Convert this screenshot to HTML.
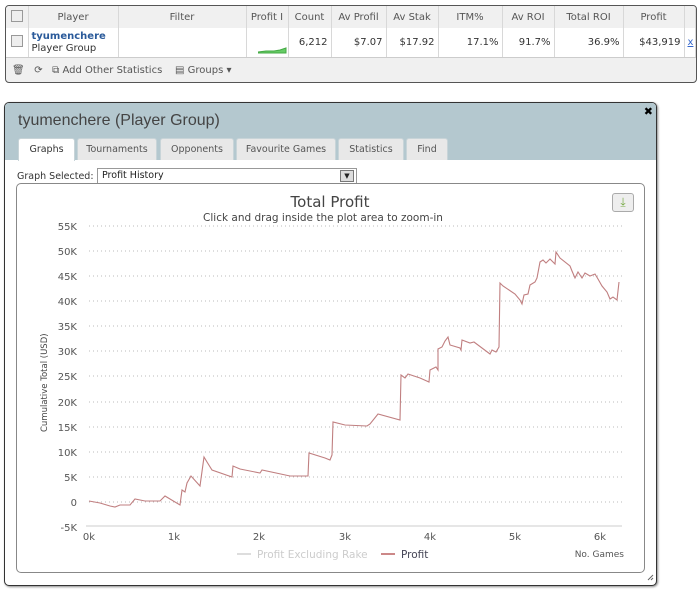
<!DOCTYPE html>
<html><head><meta charset="utf-8"><style>
body{margin:0;width:700px;height:593px;background:#fff;font-family:"DejaVu Sans","Liberation Sans",sans-serif;position:relative;overflow:hidden}
.abs{position:absolute}
#top{left:5px;top:5px;width:690px;height:76px;border:1px solid #555;border-radius:4px;background:#f0f0f0;overflow:hidden}
table{border-collapse:collapse;font-size:10px;color:#444;table-layout:fixed}
td{border-right:1px solid #d8d8d8;height:24px;padding:0 3px;white-space:nowrap;overflow:hidden}
tr.h td{background:#f0f0f0;color:#555;text-align:center;height:22px}
tr.d td{background:#fff;border-bottom:1px solid #ccc;height:27px;text-align:right;color:#333}
.cb{width:10px;height:10px;border:1px solid #999;background:#eee;display:inline-block}
#dlg{left:4px;top:102px;width:651px;height:482px;border:1px solid #333;border-radius:5px;background:#fff;box-shadow:1px 1px 2px #888;overflow:hidden}
#hd{left:0;top:0;width:651px;height:57px;background:#b4c8cf}
.tab{position:absolute;top:35px;height:21px;background:#e8e8e8;border:1px solid #c8d4d8;border-bottom:none;border-radius:3px 3px 0 0;font-size:9.5px;color:#555;text-align:center;line-height:22px}
</style></head><body>
<div id="top" class="abs">
<table style="width:690px">
<colgroup><col style="width:22px"><col style="width:90px"><col style="width:128px"><col style="width:42px"><col style="width:43px"><col style="width:55px"><col style="width:52px"><col style="width:64px"><col style="width:52px"><col style="width:69px"><col style="width:61px"><col></colgroup>
<tr class="h"><td><span class="cb"></span></td><td>Player</td><td>Filter</td><td>Profit I</td><td>Count</td><td>Av Profil</td><td>Av Stak</td><td>ITM%</td><td>Av ROI</td><td>Total ROI</td><td>Profit</td><td></td></tr>
<tr class="d"><td style="text-align:center"><span class="cb"></span></td><td style="text-align:left;line-height:12px"><b style="color:#2a5a9a">tyumenchere</b><br>Player Group</td><td></td><td style="padding:0;vertical-align:bottom"><svg width="40" height="26"><polyline points="10,24 18,23 26,23 32,22 38,20 38,25 10,25" fill="#6c6" stroke="#4a4"/></svg></td><td>6,212</td><td>$7.07</td><td>$17.92</td><td>17.1%</td><td>91.7%</td><td>36.9%</td><td>$43,919</td><td style="color:#36c;text-decoration:underline;text-align:left">x</td></tr>
</table>
<div class="abs" style="left:6px;top:59px;font-size:10px;color:#555">🗑&nbsp;&nbsp;&nbsp;⟳&nbsp;&nbsp;&nbsp;⧉ Add Other Statistics&nbsp;&nbsp;&nbsp;&nbsp;▤ Groups ▾</div>
</div>
<div id="dlg" class="abs">
<div id="hd" class="abs"></div>
<div class="abs" style="left:13px;top:9px;font-size:16px;color:#444;font-family:'Liberation Sans',sans-serif">tyumenchere (Player Group)</div>
<div class="abs" style="right:3px;top:2px;font-size:11px;font-weight:bold">✖</div>
<div class="tab" style="left:13px;width:55px;background:#fff;height:22px;color:#333">Graphs</div>
<div class="tab" style="left:72px;width:78px">Tournaments</div>
<div class="tab" style="left:155px;width:72px">Opponents</div>
<div class="tab" style="left:231px;width:98px">Favourite Games</div>
<div class="tab" style="left:333px;width:64px">Statistics</div>
<div class="tab" style="left:401px;width:40px">Find</div>
<div class="abs" style="left:12px;top:68px;font-size:9.5px;color:#333">Graph Selected:</div>
<div class="abs" style="left:92px;top:65px;width:254px;height:14px;border:1px solid #999;font-size:9.5px;line-height:14px;padding-left:4px;color:#222">Profit History<span style="position:absolute;right:2px;top:1px;width:12px;height:10px;border:1px solid #777;background:#ddd;font-size:7px;line-height:10px;text-align:center">▼</span></div>
</div>
<div class="abs" style="left:16px;top:183px;width:627px;height:388px;border:1px solid #888;border-radius:5px;background:#fff"></div>
<div class="abs" style="left:612px;top:193px;width:20px;height:17px;border:1px solid #aaa;border-radius:3px;background:#eee;color:#7a4;text-align:center;font-size:12px;line-height:17px">⤓</div>
<svg class="abs" style="left:0;top:0" width="700" height="593" font-family="DejaVu Sans, sans-serif">
<text x="330" y="207" font-size="15" fill="#444" text-anchor="middle">Total Profit</text>
<text x="323" y="221" font-size="10.5" fill="#444" text-anchor="middle">Click and drag inside the plot area to zoom-in</text>
<g stroke="#bbb" stroke-dasharray="1,3">
<line x1="89" x2="622" y1="226" y2="226"/><line x1="89" x2="622" y1="251" y2="251"/><line x1="89" x2="622" y1="276" y2="276"/><line x1="89" x2="622" y1="301" y2="301"/><line x1="89" x2="622" y1="326" y2="326"/><line x1="89" x2="622" y1="351" y2="351"/><line x1="89" x2="622" y1="376" y2="376"/><line x1="89" x2="622" y1="402" y2="402"/><line x1="89" x2="622" y1="427" y2="427"/><line x1="89" x2="622" y1="452" y2="452"/><line x1="89" x2="622" y1="477" y2="477"/><line x1="89" x2="622" y1="502" y2="502"/>
</g>
<line x1="86" x2="622" y1="526" y2="526" stroke="#ccc"/>
<g font-size="10" fill="#555" text-anchor="end">
<text x="77" y="230">55K</text><text x="77" y="255">50K</text><text x="77" y="280">45K</text><text x="77" y="305">40K</text><text x="77" y="330">35K</text><text x="77" y="355">30K</text><text x="77" y="380">25K</text><text x="77" y="406">20K</text><text x="77" y="431">15K</text><text x="77" y="456">10K</text><text x="77" y="481">5K</text><text x="77" y="506">0</text><text x="77" y="531">-5K</text>
</g>
<g font-size="10" fill="#555" text-anchor="middle">
<text x="89" y="540">0k</text><text x="174" y="540">1k</text><text x="259" y="540">2k</text><text x="345" y="540">3k</text><text x="430" y="540">4k</text><text x="515" y="540">5k</text><text x="600" y="540">6k</text>
</g>
<text x="0" y="0" font-size="8.5" fill="#444" transform="translate(47,432) rotate(-90)">Cumulative Total (USD)</text>
<text x="624" y="557" font-size="9" fill="#555" text-anchor="end">No. Games</text>
<line x1="237" x2="251" y1="554" y2="554" stroke="#ddd" stroke-width="2"/>
<text x="257" y="558" font-size="10.5" fill="#ccc">Profit Excluding Rake</text>
<line x1="381" x2="395" y1="554" y2="554" stroke="#c88" stroke-width="2"/>
<text x="401" y="558" font-size="10.5" fill="#445">Profit</text>
<polyline fill="none" stroke="#c07f80" stroke-width="1.1" points="89,501 100,503 110,506 115,507 120,505 130,505 135,499 145,501 160,501 165,496 170,499 180,505 182,490 185,492 187,483 191,476 200,486 204,457 207,462 212,470 232,477 233,466 240,469 260,473 262,470 290,476 308,476 309,453 325,458 330,460 332,455 333,422 345,425 367,426 370,424 378,414 400,420 401,375 405,378 408,374 420,378 429,382 430,370 436,367 438,370 438,349 442,347 445,341 448,337 450,345 460,348 461,350 462,340 470,343 474,342 490,354 492,350 496,352 499,347 500,283 503,286 515,294 520,300 522,304 524,295 528,294 530,285 535,282 537,278 540,262 543,260 546,263 550,259 555,264 556,252 560,258 570,266 572,271 575,278 578,272 582,278 585,273 590,276 595,274 598,279 602,286 607,292 610,299 613,297 617,300 619,282"/>
<path d="M648 580 L653 575 M651 580 L653 578" stroke="#666"/>
</svg>
</body></html>
